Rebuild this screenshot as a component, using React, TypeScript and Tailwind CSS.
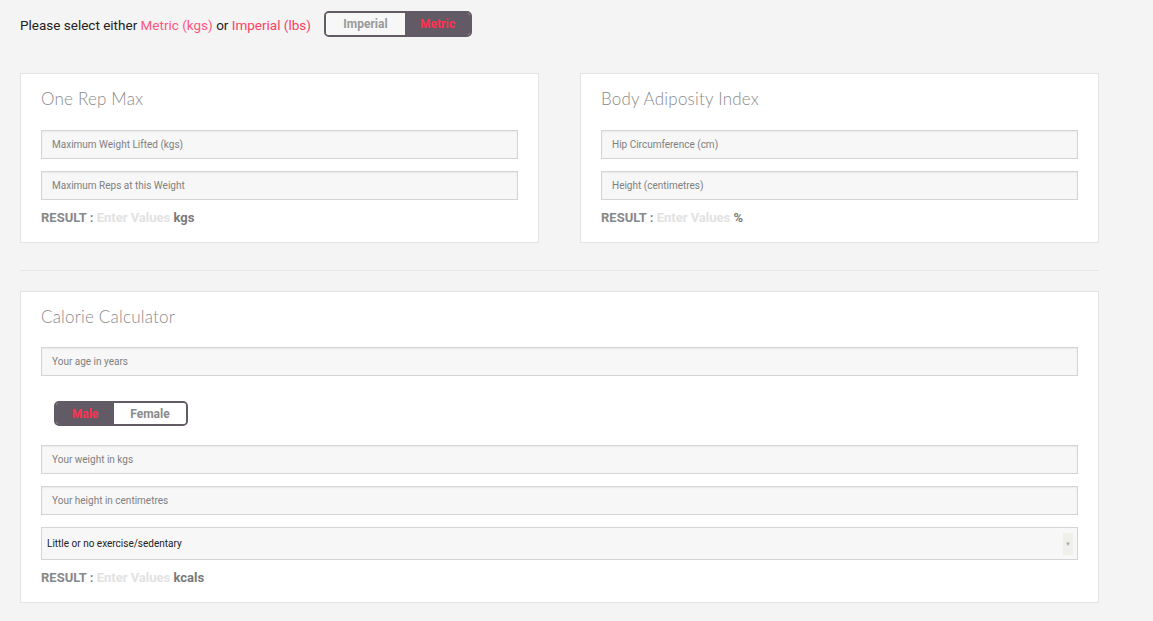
const font = { fontFamily: "Roboto, 'Liberation Sans', sans-serif" };

function Field({ label }: { label: string }) {
  return (
    <div className="h-[29px] flex items-center border border-[#d4d4d4] bg-[#f7f7f7] px-[10px] text-[10px] text-[#808080] shadow-[inset_0_1px_2px_rgba(0,0,0,0.06)]">
      {label}
    </div>
  );
}

function Result({ unit }: { unit: string }) {
  return (
    <p className="mt-[9px] text-[13px] leading-[18px] font-bold text-[#888]">
      RESULT : <span className="text-[#e2e2e2]">Enter Values</span>{" "}
      <span className="text-[#7a7a7a]">{unit}</span>
    </p>
  );
}

function Card({ title, children, className = "" }: { title: string; children: React.ReactNode; className?: string }) {
  return (
    <div className={"border border-[#e3e3e3] bg-white px-5 pt-[12px] pb-[15px] " + className}>
      <h3 className="text-[17px] font-light text-[#8a8a8a] tracking-[0.2px]" style={{ fontFamily: "Lato, 'Open Sans', sans-serif" }}>
        {title}
      </h3>
      {children}
    </div>
  );
}

export default function App() {
  return (
    <div className="min-h-[621px] bg-[#f4f4f4] pl-5 pr-[54px] pt-[11px]" style={font}>
      <div className="flex items-center">
        <p className="mt-[3px] text-[13.5px] text-[#222]">
          Please select either <span className="text-[#ff5580]">Metric (kgs)</span> or{" "}
          <span className="text-[#ff3d62]">Imperial (lbs)</span>
        </p>
        <div className="ml-[13px] flex h-[26px] overflow-hidden rounded-[5px] border-2 border-[#625b66] text-[12px] font-bold">
          <span className="flex w-[79px] items-center justify-center bg-[#f7f7f7] text-[#9a9a9a]">Imperial</span>
          <span className="flex w-[65px] items-center justify-center bg-[#625b66] text-[#ff3150]">Metric</span>
        </div>
      </div>

      <div className="mt-[36px] grid grid-cols-2 gap-[41px]">
        <Card title="One Rep Max">
          <div className="mt-[18px] flex flex-col gap-[12px]">
            <Field label="Maximum Weight Lifted (kgs)" />
            <Field label="Maximum Reps at this Weight" />
          </div>
          <Result unit="kgs" />
        </Card>
        <Card title="Body Adiposity Index">
          <div className="mt-[18px] flex flex-col gap-[12px]">
            <Field label="Hip Circumference (cm)" />
            <Field label="Height (centimetres)" />
          </div>
          <Result unit="%" />
        </Card>
      </div>

      <div className="mt-[27px] border-t border-[#e6e6e6]" />

      <Card title="Calorie Calculator" className="mt-[20px]">
        <div className="mt-[18px]">
          <Field label="Your age in years" />
        </div>
        <div className="ml-[13px] mt-[25px] flex h-[25px] w-[134px] overflow-hidden rounded-[5px] border-2 border-[#625b66] text-[12px] font-bold">
          <span className="flex w-[58px] items-center justify-center bg-[#625b66] text-[#ff3150]">Male</span>
          <span className="flex flex-1 items-center justify-center bg-white text-[#8a8a8a]">Female</span>
        </div>
        <div className="mt-[19px] flex flex-col gap-[12px]">
          <Field label="Your weight in kgs" />
          <Field label="Your height in centimetres" />
          <div className="flex h-[33px] items-center justify-between border border-[#d4d4d4] bg-[#f7f7f7] pl-[5px] pr-[4px] text-[10px] text-[#222]">
            <span>Little or no exercise/sedentary</span>
            <span className="flex h-[22px] w-[10px] items-center justify-center bg-[#f0f0ea] text-[6px] text-[#aaa]">▼</span>
          </div>
        </div>
        <Result unit="kcals" />
      </Card>
    </div>
  );
}
